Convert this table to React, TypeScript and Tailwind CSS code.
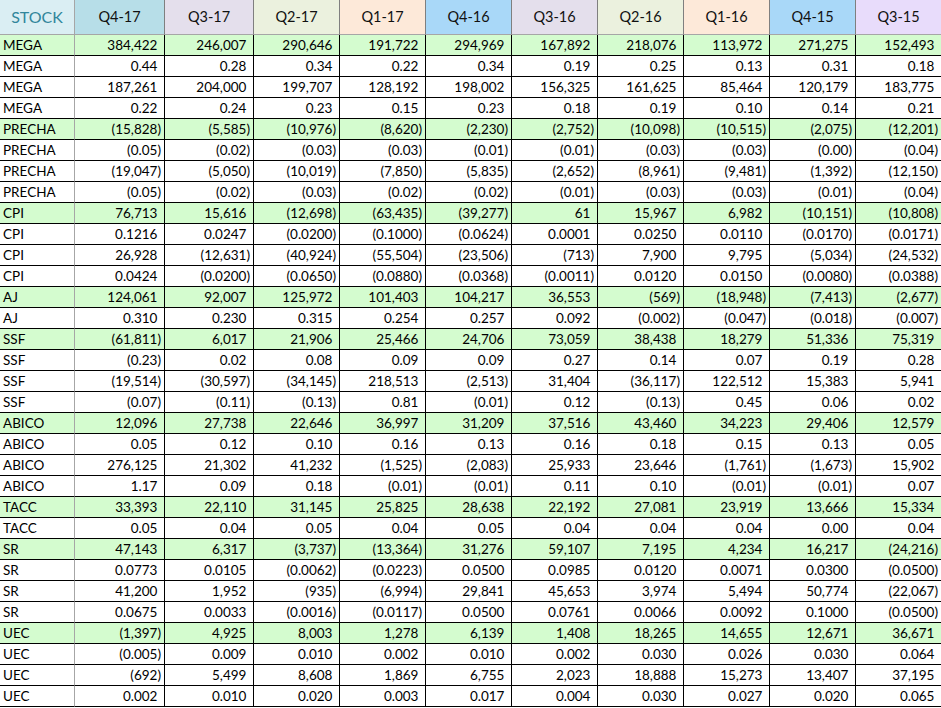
import React from "react";

const headers = [
  { label: "Q4-17", bg: "bg-[#b7dee8]" },
  { label: "Q3-17", bg: "bg-[#e4dfec]" },
  { label: "Q2-17", bg: "bg-[#ebf1de]" },
  { label: "Q1-17", bg: "bg-[#fde9d9]" },
  { label: "Q4-16", bg: "bg-[#a9d8f8]" },
  { label: "Q3-16", bg: "bg-[#e4dfec]" },
  { label: "Q2-16", bg: "bg-[#ebf1de]" },
  { label: "Q1-16", bg: "bg-[#fde9d9]" },
  { label: "Q4-15", bg: "bg-[#a9d8f8]" },
  { label: "Q3-15", bg: "bg-[#e8dcfb]" },
];

const groups: [string, string[]][] = [
  [
    "MEGA",
    [
      "384,422 246,007 290,646 191,722 294,969 167,892 218,076 113,972 271,275 152,493",
      "0.44 0.28 0.34 0.22 0.34 0.19 0.25 0.13 0.31 0.18",
      "187,261 204,000 199,707 128,192 198,002 156,325 161,625 85,464 120,179 183,775",
      "0.22 0.24 0.23 0.15 0.23 0.18 0.19 0.10 0.14 0.21",
    ],
  ],
  [
    "PRECHA",
    [
      "(15,828) (5,585) (10,976) (8,620) (2,230) (2,752) (10,098) (10,515) (2,075) (12,201)",
      "(0.05) (0.02) (0.03) (0.03) (0.01) (0.01) (0.03) (0.03) (0.00) (0.04)",
      "(19,047) (5,050) (10,019) (7,850) (5,835) (2,652) (8,961) (9,481) (1,392) (12,150)",
      "(0.05) (0.02) (0.03) (0.02) (0.02) (0.01) (0.03) (0.03) (0.01) (0.04)",
    ],
  ],
  [
    "CPI",
    [
      "76,713 15,616 (12,698) (63,435) (39,277) 61 15,967 6,982 (10,151) (10,808)",
      "0.1216 0.0247 (0.0200) (0.1000) (0.0624) 0.0001 0.0250 0.0110 (0.0170) (0.0171)",
      "26,928 (12,631) (40,924) (55,504) (23,506) (713) 7,900 9,795 (5,034) (24,532)",
      "0.0424 (0.0200) (0.0650) (0.0880) (0.0368) (0.0011) 0.0120 0.0150 (0.0080) (0.0388)",
    ],
  ],
  [
    "AJ",
    [
      "124,061 92,007 125,972 101,403 104,217 36,553 (569) (18,948) (7,413) (2,677)",
      "0.310 0.230 0.315 0.254 0.257 0.092 (0.002) (0.047) (0.018) (0.007)",
    ],
  ],
  [
    "SSF",
    [
      "(61,811) 6,017 21,906 25,466 24,706 73,059 38,438 18,279 51,336 75,319",
      "(0.23) 0.02 0.08 0.09 0.09 0.27 0.14 0.07 0.19 0.28",
      "(19,514) (30,597) (34,145) 218,513 (2,513) 31,404 (36,117) 122,512 15,383 5,941",
      "(0.07) (0.11) (0.13) 0.81 (0.01) 0.12 (0.13) 0.45 0.06 0.02",
    ],
  ],
  [
    "ABICO",
    [
      "12,096 27,738 22,646 36,997 31,209 37,516 43,460 34,223 29,406 12,579",
      "0.05 0.12 0.10 0.16 0.13 0.16 0.18 0.15 0.13 0.05",
      "276,125 21,302 41,232 (1,525) (2,083) 25,933 23,646 (1,761) (1,673) 15,902",
      "1.17 0.09 0.18 (0.01) (0.01) 0.11 0.10 (0.01) (0.01) 0.07",
    ],
  ],
  [
    "TACC",
    [
      "33,393 22,110 31,145 25,825 28,638 22,192 27,081 23,919 13,666 15,334",
      "0.05 0.04 0.05 0.04 0.05 0.04 0.04 0.04 0.00 0.04",
    ],
  ],
  [
    "SR",
    [
      "47,143 6,317 (3,737) (13,364) 31,276 59,107 7,195 4,234 16,217 (24,216)",
      "0.0773 0.0105 (0.0062) (0.0223) 0.0500 0.0985 0.0120 0.0071 0.0300 (0.0500)",
      "41,200 1,952 (935) (6,994) 29,841 45,653 3,974 5,494 50,774 (22,067)",
      "0.0675 0.0033 (0.0016) (0.0117) 0.0500 0.0761 0.0066 0.0092 0.1000 (0.0500)",
    ],
  ],
  [
    "UEC",
    [
      "(1,397) 4,925 8,003 1,278 6,139 1,408 18,265 14,655 12,671 36,671",
      "(0.005) 0.009 0.010 0.002 0.010 0.002 0.030 0.026 0.030 0.064",
      "(692) 5,499 8,608 1,869 6,755 2,023 18,888 15,273 13,407 37,195",
      "0.002 0.010 0.020 0.003 0.017 0.004 0.030 0.027 0.020 0.065",
    ],
  ],
];

const rows = groups.flatMap(([name, lines]) =>
  lines.map((line, i) => ({ name, values: line.split(" "), green: i === 0 }))
);

// accounting format: positive values keep room for the closing paren
const Value = ({ v }: { v: string }) => {
  const neg = v.startsWith("(");
  return (
    <span>
      {v}
      {!neg && <span className="invisible">)</span>}
    </span>
  );
};

export default function App() {
  return (
    <div
      className="w-[941px] h-[708px] overflow-hidden bg-white text-[13.5px] text-black"
      style={{ fontFamily: "Lato, 'Open Sans', sans-serif" }}
    >
      <div className="grid grid-cols-[75px_90px_89px_86px_86px_86px_86px_86px_86px_86px_85px]">
        <div className="h-[35px] flex items-center justify-center bg-[#daeef3] text-[#31869b] text-[16px] border-r border-b border-[#a6a6a6]">
          STOCK
        </div>
        {headers.map((h, i) => (
          <div
            key={h.label}
            className={`h-[35px] flex items-center justify-center text-[14.5px] text-[#111] border-b border-[#a6a6a6] ${h.bg} ${
              i < headers.length - 1 ? "border-r border-r-[#7f7f7f]" : ""
            }`}
          >
            {h.label}
          </div>
        ))}
        {rows.map((r, ri) => (
          <React.Fragment key={ri}>
            <div
              className={`h-[21px] flex items-center pl-[3px] border-b border-b-black border-r border-r-[#a6a6a6] ${
                r.green ? "bg-[#d4fccf]" : "bg-white"
              }`}
            >
              {r.name}
            </div>
            {r.values.map((v, ci) => (
              <div
                key={ci}
                className={`h-[21px] flex items-center justify-end pr-[3px] border-b border-b-black ${
                  ci < r.values.length - 1 ? "border-r border-r-black" : ""
                } ${r.green ? "bg-[#d4fccf]" : "bg-white"}`}
              >
                <Value v={v} />
              </div>
            ))}
          </React.Fragment>
        ))}
      </div>
    </div>
  );
}
